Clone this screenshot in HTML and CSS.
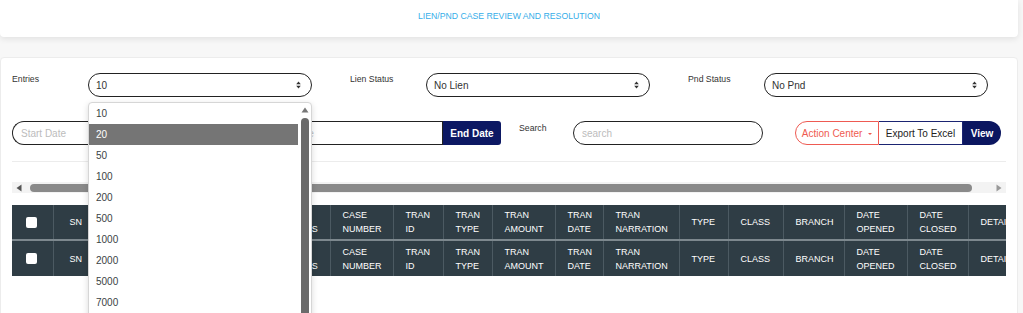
FILE: index.html
```html
<!DOCTYPE HTML>
<html lang="en">
  <head>
    <title>Lien/PND Case Review</title>
    <meta charset="utf-8">
    <link rel="stylesheet" href="styles.css">
  </head>
  <body>

    <div class="title-card">
      LIEN/PND CASE REVIEW AND RESOLUTION
    </div>

    <div class="main-card">

      <div class="filter-row">
        <div class="field">
          <label class="field-label">Entries</label>
          <div class="select-wrap">
            <div class="select">
              <span>10</span>
              <svg class="updown" width="5" height="8" viewBox="0 0 5 8"><path d="M2.5 0.5 L4.8 3.3 H0.2 Z M2.5 7.5 L4.8 4.7 H0.2 Z" fill="#333"/></svg>
            </div>
            <!-- open native list -->
            <div class="options">
              <div class="option-list">
                <div class="option">10</div>
                <div class="option selected">20</div>
                <div class="option">50</div>
                <div class="option">100</div>
                <div class="option">200</div>
                <div class="option">500</div>
                <div class="option">1000</div>
                <div class="option">2000</div>
                <div class="option">5000</div>
                <div class="option">7000</div>
              </div>
              <div class="list-scroll">
                <svg class="up-arrow" width="8" height="6" viewBox="0 0 8 6"><path d="M4 0.5 L7.5 5.5 H0.5 Z" fill="#777"/></svg>
                <div class="list-thumb"></div>
              </div>
            </div>
          </div>
        </div>

        <div class="field">
          <label class="field-label">Lien Status</label>
          <div class="select-wrap">
            <div class="select">
              <span>No Lien</span>
              <svg class="updown" width="5" height="8" viewBox="0 0 5 8"><path d="M2.5 0.5 L4.8 3.3 H0.2 Z M2.5 7.5 L4.8 4.7 H0.2 Z" fill="#333"/></svg>
            </div>
          </div>
        </div>

        <div class="field">
          <label class="field-label">Pnd Status</label>
          <div class="select-wrap">
            <div class="select">
              <span>No Pnd</span>
              <svg class="updown" width="5" height="8" viewBox="0 0 5 8"><path d="M2.5 0.5 L4.8 3.3 H0.2 Z M2.5 7.5 L4.8 4.7 H0.2 Z" fill="#333"/></svg>
            </div>
          </div>
        </div>
      </div>

      <div class="action-row">
        <div class="date-group">
          <input class="date-start" type="text" placeholder="Start Date">
          <input class="date-end" type="text" placeholder="End Date">
          <button class="btn-end">End Date</button>
        </div>

        <div class="search-field">
          <label class="search-label">Search</label>
          <input class="search-input" type="text" placeholder="search">
        </div>

        <div class="btn-group">
          <button class="btn-action">Action Center <span class="caret"></span></button>
          <button class="btn-export">Export To Excel</button>
          <button class="btn-view">View</button>
        </div>
      </div>

      <div class="divider"></div>

      <div class="top-scroll">
        <svg width="6" height="8" viewBox="0 0 6 8"><path d="M0.5 4 L5.5 0.5 V7.5 Z" fill="#555"/></svg>
        <div class="top-thumb"></div>
        <svg width="6" height="8" viewBox="0 0 6 8"><path d="M5.5 4 L0.5 0.5 V7.5 Z" fill="#999"/></svg>
      </div>

      <div class="table-wrap">
        <table class="cases">
          <colgroup>
            <col class="w-check"><col class="w-sn"><col class="w-acno"><col class="w-acname"><col class="w-status">
            <col class="w-case"><col class="w-tid"><col class="w-ttype"><col class="w-amount"><col class="w-tdate">
            <col class="w-narr"><col class="w-type"><col class="w-class"><col class="w-branch"><col class="w-opened">
            <col class="w-closed"><col class="w-details">
          </colgroup>
          <thead>
            <tr>
              <th><span class="check"></span></th>
              <th class="center">SN</th>
              <th>ACCOUNT NUMBER</th>
              <th>ACCOUNT NAME</th>
              <th>CASE STATUS</th>
              <th>CASE NUMBER</th>
              <th>TRAN ID</th>
              <th>TRAN TYPE</th>
              <th>TRAN AMOUNT</th>
              <th>TRAN DATE</th>
              <th>TRAN NARRATION</th>
              <th>TYPE</th>
              <th>CLASS</th>
              <th>BRANCH</th>
              <th>DATE OPENED</th>
              <th>DATE CLOSED</th>
              <th>DETAILS</th>
            </tr>
          </thead>
          <tfoot>
            <tr>
              <th><span class="check"></span></th>
              <th class="center">SN</th>
              <th>ACCOUNT NUMBER</th>
              <th>ACCOUNT NAME</th>
              <th>CASE STATUS</th>
              <th>CASE NUMBER</th>
              <th>TRAN ID</th>
              <th>TRAN TYPE</th>
              <th>TRAN AMOUNT</th>
              <th>TRAN DATE</th>
              <th>TRAN NARRATION</th>
              <th>TYPE</th>
              <th>CLASS</th>
              <th>BRANCH</th>
              <th>DATE OPENED</th>
              <th>DATE CLOSED</th>
              <th>DETAILS</th>
            </tr>
          </tfoot>
        </table>
      </div>

    </div>

  </body>
</html>
```

FILE: styles.css
```css
      html {
        height: 100%;
      }
      body {
        margin: 0;
        padding: 0;
        background: #f7f7f7;
        color: #333;
        font-family: "Liberation Sans", Arial, sans-serif;
        font-size: 10px;
        height: 100%;
        overflow: hidden;
      }

      .title-card {
        width: 1018px;
        height: 37px;
        box-sizing: border-box;
        padding-top: 11px;
        background: #fff;
        border-radius: 0 0 4px 4px;
        box-shadow: 0 2px 6px rgba(0,0,0,0.09);
        text-align: center;
        font-size: 8.7px;
        line-height: 10px;
        color: #35aee9;
      }

      .main-card {
        width: 1018px;
        margin-top: 20px;
        box-sizing: border-box;
        padding: 15px 11px 40px;
        background: #fff;
        border: 1px solid #ececec;
        border-radius: 4px;
      }

      /* first row: three selects */
      .filter-row {
        display: flex;
        gap: 38px;
      }
      .field {
        display: flex;
      }
      .field-label {
        width: 76px;
        padding-top: 1px;
        font-size: 8.7px;
        line-height: 10px;
        color: #333;
      }
      .select-wrap {
        position: relative;
      }
      .select {
        width: 224px;
        height: 24px;
        box-sizing: border-box;
        border: 1px solid #222;
        border-radius: 12px;
        padding: 0 10px 0 7px;
        display: flex;
        align-items: center;
        justify-content: space-between;
        font-size: 10px;
        color: #333;
      }

      .options {
        position: absolute;
        left: 0;
        top: 29px;
        width: 224px;
        height: 240px;
        box-sizing: border-box;
        background: #fff;
        border: 1px solid #d6d6d6;
        border-radius: 4px 4px 0 0;
        box-shadow: 0 2px 6px rgba(0,0,0,0.15);
        display: flex;
        z-index: 5;
      }
      .option-list {
        flex: 1;
      }
      .option {
        height: 21px;
        line-height: 21px;
        padding-left: 7px;
        font-size: 10px;
        color: #3a3f44;
      }
      .option.selected {
        background: #757575;
        color: #fff;
      }
      .list-scroll {
        width: 13px;
        display: flex;
        flex-direction: column;
        align-items: center;
        padding-top: 4px;
      }
      .up-arrow {
        margin-bottom: 5px;
      }
      .list-thumb {
        width: 8px;
        flex: 1;
        background: #6a6a6a;
        border-radius: 4px 4px 0 0;
      }

      /* second row */
      .action-row {
        display: flex;
        margin-top: 24px;
        align-items: flex-start;
      }
      .date-group {
        display: flex;
      }
      input {
        font-family: "Liberation Sans", Arial, sans-serif;
        font-size: 10px;
        color: #333;
        outline: none;
      }
      input::placeholder {
        color: #bcbcbc;
      }
      .date-start {
        width: 251px;
        height: 24px;
        box-sizing: border-box;
        border: 1px solid #222;
        border-right: none;
        border-radius: 12px 0 0 12px;
        padding: 0 8px;
      }
      .date-end {
        width: 180px;
        height: 24px;
        box-sizing: border-box;
        border: 1px solid #222;
        border-radius: 0;
        padding: 0 8px;
      }
      .btn-end {
        width: 58px;
        height: 24px;
        border: none;
        border-radius: 0 3px 3px 0;
        background: #0c1863;
        color: #fff;
        font: bold 10px "Liberation Sans", Arial, sans-serif;
      }

      .search-field {
        display: flex;
        margin-left: 18px;
      }
      .search-label {
        width: 54px;
        padding-top: 2px;
        font-size: 8.7px;
        line-height: 10px;
      }
      .search-input {
        width: 190px;
        height: 24px;
        box-sizing: border-box;
        border: 1px solid #222;
        border-radius: 12px;
        padding: 0 8px;
      }

      .btn-group {
        display: flex;
        margin-left: 32px;
      }
      .btn-group button {
        height: 24px;
        box-sizing: border-box;
        font: 10px "Liberation Sans", Arial, sans-serif;
        padding: 0;
      }
      .btn-action {
        width: 84px;
        border: 1px solid #ee5a52;
        border-radius: 12px 0 0 12px;
        background: #fff;
        color: #ef5a50;
      }
      .caret {
        display: inline-block;
        vertical-align: middle;
        margin-left: 3px;
        border-top: 2px solid #ef5a50;
        border-left: 2px solid transparent;
        border-right: 2px solid transparent;
      }
      .btn-export {
        width: 84px;
        border: 1px solid #1b2472;
        border-left: none;
        background: #fff;
        color: #222;
      }
      .btn-view {
        width: 38px;
        border: none;
        border-radius: 0 12px 12px 0;
        background: #0b1660;
        color: #fff;
        font-weight: bold !important;
      }

      .divider {
        margin-top: 16px;
        height: 1px;
        background: #ececec;
      }

      /* scrollbar drawn above the table */
      .top-scroll {
        margin-top: 20px;
        height: 11px;
        background: #f3f3f3;
        display: flex;
        align-items: center;
        padding: 0 4px;
        gap: 8px;
      }
      .top-thumb {
        flex: 1;
        height: 8px;
        margin-right: 16px;
        border-radius: 4px;
        background: #8a8a8a;
      }

      .table-wrap {
        margin-top: 12px;
        width: 994px;
        overflow: hidden;
      }
      .cases {
        width: 1026px;
        table-layout: fixed;
        border-collapse: collapse;
      }
      .cases th {
        background: #2f3d45;
        color: #fff;
        font-size: 9px;
        font-weight: normal;
        line-height: 14px;
        height: 34px;
        text-align: left;
        padding: 0 12px;
        border-left: 1px solid #4c5a62;
        white-space: normal;
        overflow: hidden;
        vertical-align: middle;
      }
      .cases th:first-child {
        border-left: none;
        padding: 0 0 0 14px;
      }
      .cases th.center {
        padding: 0 0 0 16px;
      }
      .cases tfoot th {
        border-top: 2px solid #7d888e;
        height: 35px;
      }
      .check {
        display: block;
        width: 11px;
        height: 11px;
        border-radius: 2px;
        background: #fff;
      }

      .w-check { width: 41px; }
      .w-sn { width: 57px; }
      .w-acno { width: 80px; }
      .w-acname { width: 81px; }
      .w-status { width: 59px; }
      .w-case { width: 63px; }
      .w-tid { width: 50px; }
      .w-ttype { width: 49px; }
      .w-amount { width: 63px; }
      .w-tdate { width: 48px; }
      .w-narr { width: 76px; }
      .w-type { width: 49px; }
      .w-class { width: 55px; }
      .w-branch { width: 61px; }
      .w-opened { width: 63px; }
      .w-closed { width: 61px; }
      .w-details { width: 70px; }
```
